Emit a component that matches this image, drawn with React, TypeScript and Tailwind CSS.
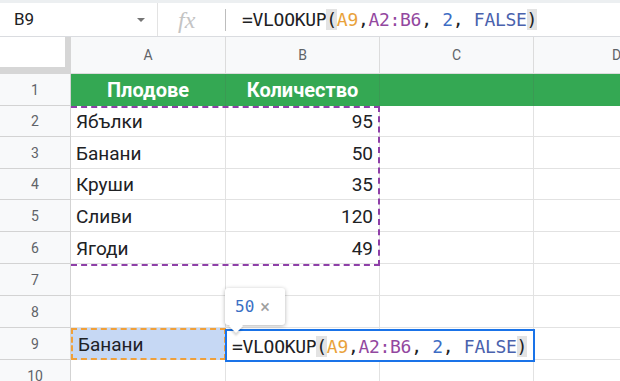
import React from 'react';

const ui = { fontFamily: 'Roboto, "Noto Sans", sans-serif' };
const mono = { fontFamily: '"DejaVu Sans Mono", "Liberation Mono", monospace' };

const rows: { h: string; a?: string; b?: string; head?: boolean }[] = [
  { h: 'h-[32px]', a: 'Плодове', b: 'Количество', head: true },
  { h: 'h-[31px]', a: 'Ябълки', b: '95' },
  { h: 'h-[32px]', a: 'Банани', b: '50' },
  { h: 'h-[31px]', a: 'Круши', b: '35' },
  { h: 'h-[32px]', a: 'Сливи', b: '120' },
  { h: 'h-[32px]', a: 'Ягоди', b: '49' },
  { h: 'h-[32px]' },
  { h: 'h-[32px]' },
  { h: 'h-[32px]', a: 'Банани' },
  { h: 'h-[32px]' },
];

const Formula: React.FC = () => (
  <span className="whitespace-pre tracking-[-0.3px]" style={mono}>
    <span className="text-[#202124]">=VLOOKUP</span>
    <span className="bg-[#e3e3e3] text-[#202124]">(</span>
    <span className="text-[#e9a23b]">A9</span>
    <span className="text-[#202124]">,</span>
    <span className="text-[#93489f]">A2:B6</span>
    <span className="text-[#202124]">, </span>
    <span className="text-[#3d6cc4]">2</span>
    <span className="text-[#202124]">, </span>
    <span className="text-[#4a62ad]">FALSE</span>
    <span className="bg-[#e3e3e3] text-[#202124]">)</span>
  </span>
);

export default function App() {
  return (
    <div className="w-[620px] h-[381px] overflow-hidden bg-white" style={ui}>
      {/* formula bar */}
      <div className="flex items-center h-[37px] border-t-[3px] border-t-[#eceff1] border-b border-b-[#dadce0]">
        <div className="w-[158px] flex items-center justify-between pl-[14px] pr-[12px] border-r border-[#e3e3e3] h-full">
          <span className="text-[17px] text-[#202124]">B9</span>
          <span className="w-0 h-0 border-l-[4px] border-r-[4px] border-t-[4px] border-l-transparent border-r-transparent border-t-[#757575]" />
        </div>
        <div className="w-[67px] h-full flex items-center pl-[20px]">
          <span className="text-[24px] italic text-[#c4c4c4] leading-none" style={{ fontFamily: '"Liberation Serif", serif' }}>fx</span>
        </div>
        <div className="w-px h-[22px] bg-[#bdbdbd]" />
        <div className="pl-[16px] text-[18px]">
          <Formula />
        </div>
      </div>

      {/* grid */}
      <div className="relative">
        <div className="flex h-[37px] bg-[#f8f9fa] text-[14px] text-[#5f6368]">
          <div className="w-[71px] h-full relative bg-white">
            <div className="absolute right-0 top-0 w-[6px] h-full bg-[#d6d6d6]" />
            <div className="absolute left-0 bottom-0 w-full h-[7px] bg-[#d6d6d6]" />
          </div>
          <div className="w-[155px] flex items-center justify-center border-r border-b border-[#dcdcdc]">A</div>
          <div className="w-[154px] flex items-center justify-center border-r border-b border-[#dcdcdc]">B</div>
          <div className="w-[154px] flex items-center justify-center border-r border-b border-[#dcdcdc]">C</div>
          <div className="flex-1 flex items-center pl-[78px] border-b border-[#dcdcdc] overflow-hidden">D</div>
        </div>

        {rows.map((r, i) => (
          <div key={i} className={`flex ${r.h}`}>
            <div className="w-[71px] shrink-0 flex items-center justify-center bg-[#f8f9fa] border-r border-b border-[#d3d3d3] text-[14px] text-[#5f6368] pt-[1px]">
              {i + 1}
            </div>
            {r.head ? (
              <div className="flex-1 flex bg-[#34a853] text-white font-bold text-[20px]">
                <div className="w-[155px] flex items-center justify-center border-r border-[#3a9a53]">{r.a}</div>
                <div className="w-[154px] flex items-center justify-center border-r border-[#3a9a53]">{r.b}</div>
                <div className="w-[154px] border-r border-[#3a9a53]" />
                <div className="flex-1" />
              </div>
            ) : (
              <>
                <div
                  className={`w-[155px] shrink-0 flex items-center pl-[5px] pt-[3px] text-[19px] text-[#202124] ${
                    i === 8
                      ? 'bg-[#c6d8f4] border-2 border-dashed border-[#f0a03a]'
                      : 'border-r border-b border-[#e2e2e2]'
                  }`}
                >
                  {r.a}
                </div>
                <div className="w-[154px] shrink-0 flex items-center justify-end pr-[6px] pt-[3px] text-[19px] text-[#202124] border-r border-b border-[#e2e2e2]">
                  {r.b}
                </div>
                <div className="w-[154px] shrink-0 border-r border-b border-[#e2e2e2]" />
                <div className="flex-1 border-b border-[#e2e2e2]" />
              </>
            )}
          </div>
        ))}

        {/* copied/reference range A2:B6 */}
        <div className="absolute left-[71px] top-[69px] w-[309px] h-[160px] border-2 border-l-0 border-dashed border-[#8e3fa8] pointer-events-none" />

        {/* in-cell editor */}
        <div className="absolute left-[225px] top-[292px] w-[310px] h-[33px] border-2 border-[#1a73e8] bg-white flex items-center pl-[5px] pt-[2px] text-[18px]">
          <Formula />
        </div>

        {/* result preview tooltip */}
        <div className="absolute left-[225px] top-[251px] w-[60px] h-[37px] bg-white rounded-[3px] shadow-[0_1px_4px_rgba(0,0,0,0.3)] flex items-center pl-[10px] gap-[6px]">
          <span className="text-[16px] text-[#3b6fc4]" style={mono}>50</span>
          <span className="text-[18px] text-[#9e9e9e] leading-none">×</span>
          <div className="absolute left-[6px] -bottom-[6px] w-[10px] h-[10px] bg-white rotate-45 shadow-[2px_2px_2px_rgba(0,0,0,0.15)]" />
        </div>
      </div>
    </div>
  );
}
